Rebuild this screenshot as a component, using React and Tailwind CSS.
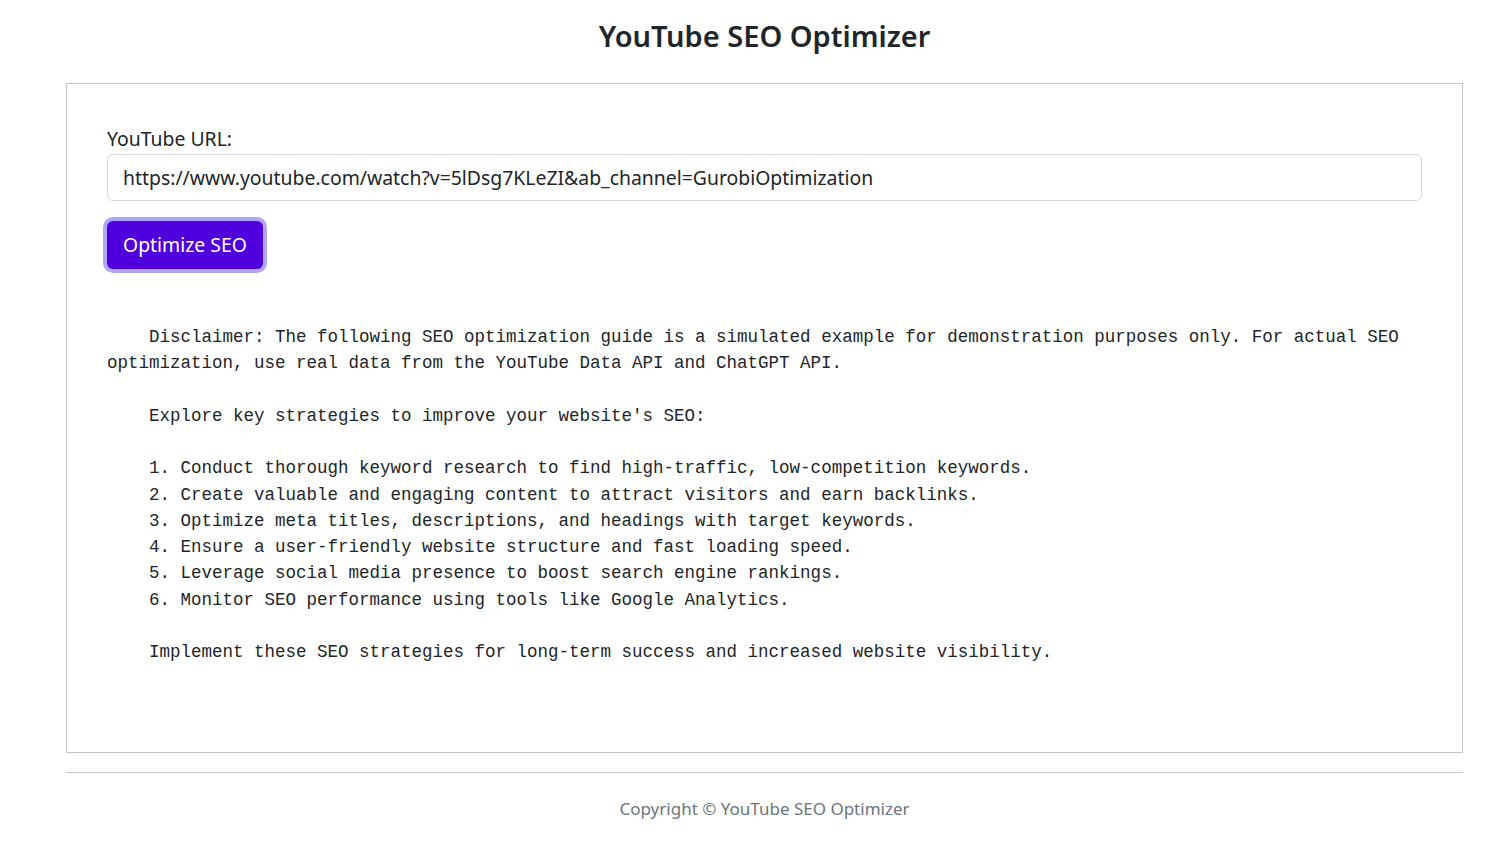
const pre = `    Disclaimer: The following SEO optimization guide is a simulated example for demonstration purposes only. For actual SEO optimization, use real data from the YouTube Data API and ChatGPT API.

    Explore key strategies to improve your website's SEO:

    1. Conduct thorough keyword research to find high-traffic, low-competition keywords.
    2. Create valuable and engaging content to attract visitors and earn backlinks.
    3. Optimize meta titles, descriptions, and headings with target keywords.
    4. Ensure a user-friendly website structure and fast loading speed.
    5. Leverage social media presence to boost search engine rankings.
    6. Monitor SEO performance using tools like Google Analytics.

    Implement these SEO strategies for long-term success and increased website visibility.`;

export default function App() {
  return (
    <div className="min-h-screen bg-white font-['Noto_Sans',sans-serif] text-[#212529]">
      <div className="ml-[66px] w-[1397px]">
        <h1 className="flex h-[83px] items-center justify-center pb-[12px] text-[29px] font-semibold leading-none">
          YouTube SEO Optimizer
        </h1>

        <div className="border border-[#c4c4c4] px-[40px] pt-[40px] pb-[87px]">
          <label className="block text-[19.4px] leading-[30px]">YouTube URL:</label>
          <input
            type="text"
            readOnly
            value="https://www.youtube.com/watch?v=5lDsg7KLeZI&ab_channel=GurobiOptimization"
            className="block h-[47px] w-full rounded-[6px] border border-[#d3d7dd] px-[15px] text-[19.4px] text-[#212529] outline-none"
          />
          <button className="mt-[20px] h-[48px] rounded-[6px] bg-[#5000dc] px-[16px] text-[19.4px] text-white ring-4 ring-[#b1a5f7]">
            Optimize SEO
          </button>

          <pre className="mt-[55px] whitespace-pre-wrap font-['Liberation_Mono',monospace] text-[17.5px] leading-[26.25px] text-[#212529]">
            {pre}
          </pre>
        </div>

        <div className="mt-[19px] border-t border-[#c8c8c8] pt-[23px] text-center text-[17px] text-[#6c757d]">
          Copyright © YouTube SEO Optimizer
        </div>
      </div>
    </div>
  );
}
